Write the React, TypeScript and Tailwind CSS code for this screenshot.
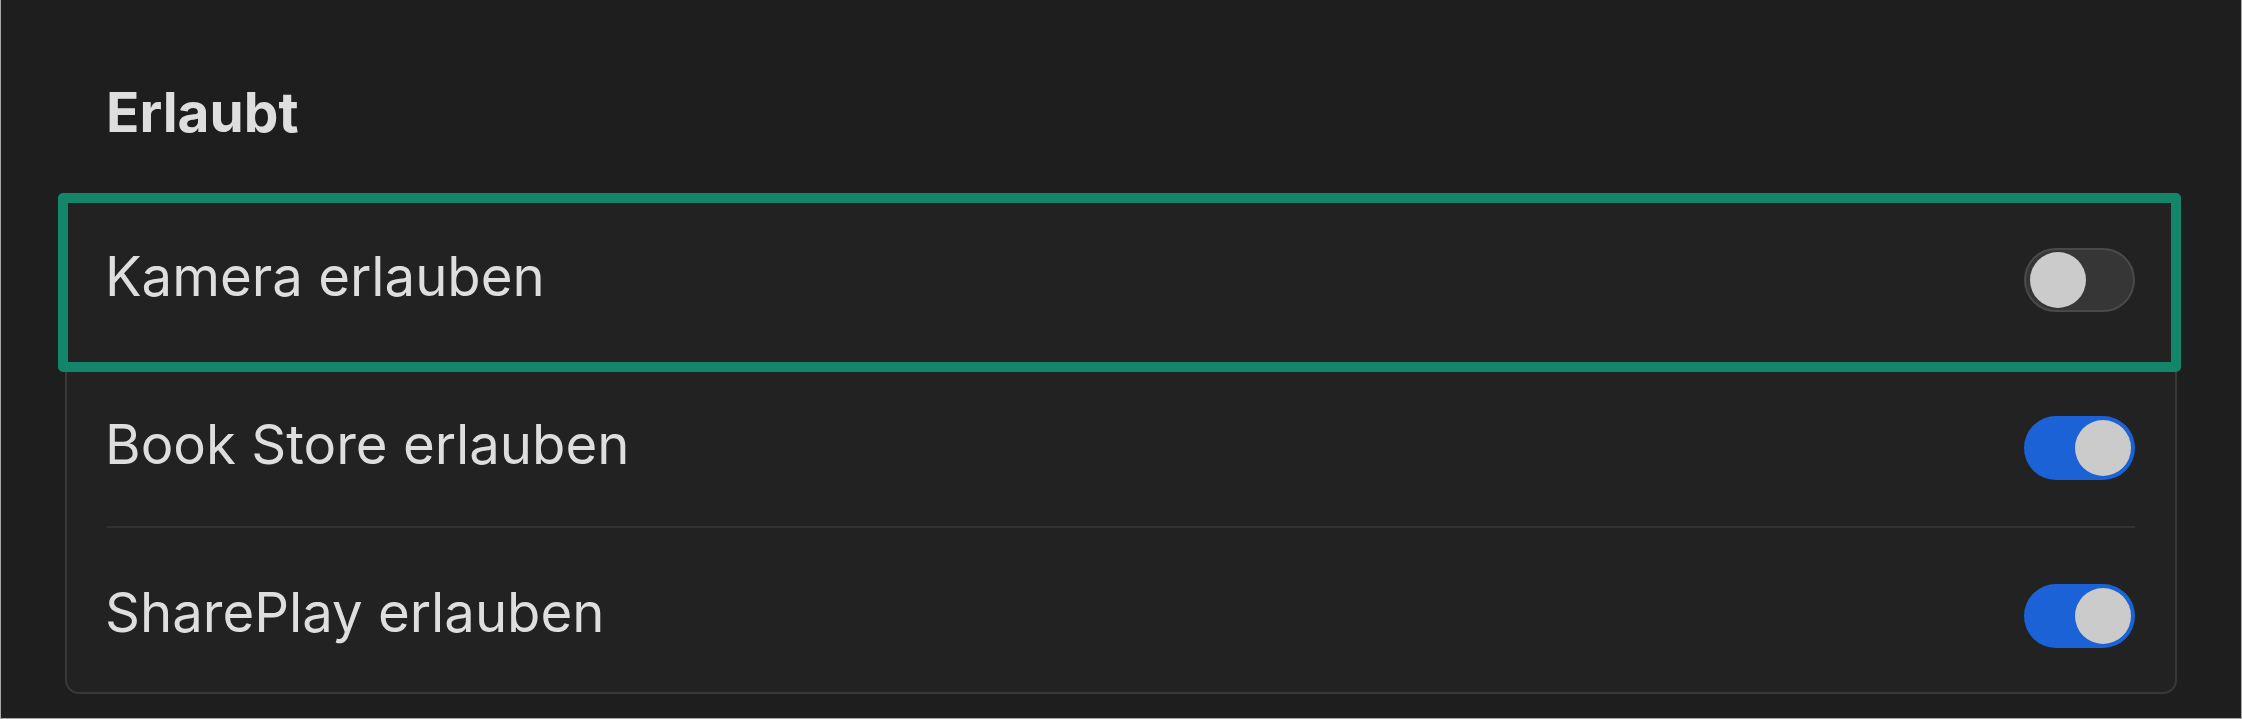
import React from 'react'

const font = { fontFamily: 'Inter, "Noto Sans", sans-serif' }

interface ToggleProps {
  on: boolean
}

const Toggle: React.FC<ToggleProps> = ({ on }) => (
  <div
    className={`flex h-[64px] w-[111px] shrink-0 items-center rounded-full px-[4px] ${
      on ? 'justify-end bg-[#1b62d6]' : 'justify-start border-2 border-[#4a4a4a] bg-[#363636] px-[2px]'
    }`}
  >
    <div className="h-[56px] w-[56px] rounded-full bg-[#cbcbcb]" />
  </div>
)

interface RowProps {
  label: string
  on: boolean
}

const Row: React.FC<RowProps> = ({ label, on }) => (
  <div className="flex h-[152px] items-center justify-between pl-[38px] pr-[40px]">
    <span className="pb-[8px] text-[54.5px] leading-[64px] text-[#dedede]">{label}</span>
    <Toggle on={on} />
  </div>
)

const Separator: React.FC<{ hidden?: boolean }> = ({ hidden }) => (
  <div className={`mx-[40px] mb-[12px] mt-[2px] h-[2px] ${hidden ? 'bg-transparent' : 'bg-[#323232]'}`} />
)

export default function App() {
  const rows = [
    { label: 'Kamera erlauben', on: false },
    { label: 'Book Store erlauben', on: true },
    { label: 'SharePlay erlauben', on: true },
  ]

  return (
    <div
      style={font}
      className="h-[719px] w-[2242px] border-x border-b border-[#a9a9a9] bg-[#1e1e1e] px-[64px] pt-[80px]"
    >
      <h2 className="pl-[41px] text-[55px] font-bold leading-[64px] text-[#dedede]">Erlaubt</h2>

      <div className="relative mt-[50px] rounded-[14px] border-2 border-[#383838] bg-[#222222] pt-[8px]">
        {rows.map((row, i) => (
          <div key={row.label}>
            <Row label={row.label} on={row.on} />
            {i < rows.length - 1 && <Separator hidden={i === 0} />}
          </div>
        ))}

        {/* focus highlight around first row */}
        <div className="pointer-events-none absolute -left-[9px] -right-[6px] -top-[3px] h-[179px] rounded-[5px] border-[10px] border-[#13866a]" />
      </div>
    </div>
  )
}
